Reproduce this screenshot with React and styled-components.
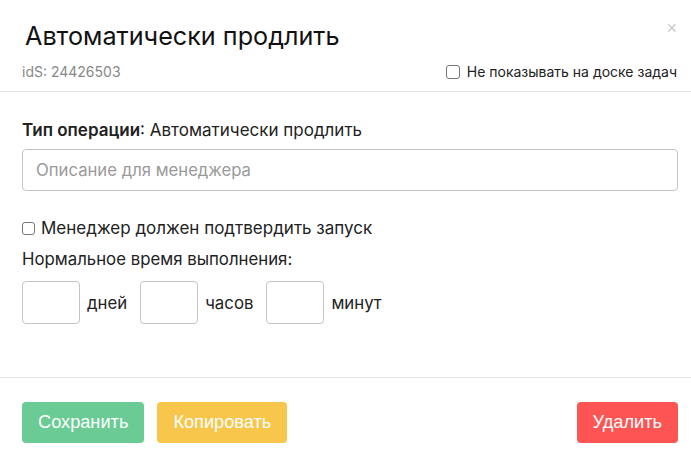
import React from 'react';
import styled, { createGlobalStyle } from 'styled-components';

const GlobalStyle = createGlobalStyle`
  body {
    margin: 0;
    background: #fff;
    font-family: Inter, "Noto Sans", sans-serif;
    color: #222;
  }
`;

const Modal = styled.div`
  width: 691px;
  height: 464px;
  display: flex;
  flex-direction: column;
  position: relative;
`;

const Header = styled.div`
  padding: 19px 14px 0 22px;
  border-bottom: 1px solid #e5e5e5;
  height: 72px;
`;

const Title = styled.h1`
  margin: 0 0 0 3px;
  font-size: 25.2px;
  font-weight: 400;
  color: #111;
  line-height: 34px;
`;

const Close = styled.span`
  position: absolute;
  top: 18px;
  right: 14px;
  font-size: 18px;
  color: #c8c8c8;
  font-family: "Liberation Sans", sans-serif;
`;

const MetaRow = styled.div`
  display: flex;
  justify-content: space-between;
  align-items: center;
  margin-top: 10px;
  font-size: 14px;
`;

const Ids = styled.span`
  color: #888;
`;

const CheckLabel = styled.label`
  display: flex;
  align-items: center;
  gap: ${(p) => p.gap || 6}px;
  font-size: ${(p) => p.size || 17}px;
  color: #222;
`;

const Box = styled.span`
  width: ${(p) => p.box || 13}px;
  height: ${(p) => p.box || 13}px;
  border: 1px solid #767676;
  border-radius: 3px;
  box-sizing: border-box;
`;

const Body = styled.div`
  padding: 28px 13px 0 22px;
  flex: 1;
  border-bottom: 1px solid #e5e5e5;
`;

const OpType = styled.div`
  font-size: 17px;
  b {
    font-weight: 600;
  }
`;

const DescInput = styled.input`
  display: block;
  width: 100%;
  box-sizing: border-box;
  height: 42px;
  margin-top: 9px;
  padding: 0 13px;
  border: 1px solid #c4c4c4;
  border-radius: 4px;
  font-family: inherit;
  font-size: 16.7px;
  &::placeholder {
    color: #9a9a9a;
  }
`;

const Section = styled.div`
  margin-top: 27px;
  display: flex;
  flex-direction: column;
  gap: 11px;
`;

const Label = styled.div`
  font-size: 16.8px;
`;

const TimeRow = styled.div`
  display: flex;
  align-items: center;
  margin-top: 1px;
`;

const TimeInput = styled.input`
  width: 58px;
  height: 43px;
  box-sizing: border-box;
  border: 1px solid #c4c4c4;
  border-radius: 4px;
`;

const Unit = styled.span`
  font-size: 16.8px;
  margin: 0 13px 0 7px;
`;

const Footer = styled.div`
  height: 86px;
  display: flex;
  align-items: flex-start;
  gap: 13px;
  padding: 24px 13px 0 22px;
  box-sizing: border-box;
`;

const Button = styled.button`
  height: 41px;
  padding: 0 16px;
  border: none;
  border-radius: 4px;
  background: ${(p) => p.bg};
  color: #fff;
  font-family: "Liberation Sans", Arial, sans-serif;
  font-size: 18.2px;
  margin-left: ${(p) => (p.push ? 'auto' : '0')};
`;

const App = () => (
  <Modal>
    <GlobalStyle />
    <Header>
      <Title>Автоматически продлить</Title>
      <Close>×</Close>
      <MetaRow>
        <Ids>idS: 24426503</Ids>
        <CheckLabel size={14} gap={7}>
          <Box box={14} />
          Не показывать на доске задач
        </CheckLabel>
      </MetaRow>
    </Header>
    <Body>
      <OpType>
        <b>Тип операции</b>: Автоматически продлить
      </OpType>
      <DescInput placeholder='Описание для менеджера' />
      <Section>
        <CheckLabel>
          <Box />
          Менеджер должен подтвердить запуск
        </CheckLabel>
        <Label>Нормальное время выполнения:</Label>
        <TimeRow>
          <TimeInput />
          <Unit>дней</Unit>
          <TimeInput />
          <Unit>часов</Unit>
          <TimeInput />
          <Unit>минут</Unit>
        </TimeRow>
      </Section>
    </Body>
    <Footer>
      <Button bg='#6bcb95'>Сохранить</Button>
      <Button bg='#f7c64a'>Копировать</Button>
      <Button bg='#fe5554' push>
        Удалить
      </Button>
    </Footer>
  </Modal>
);

export default App;
